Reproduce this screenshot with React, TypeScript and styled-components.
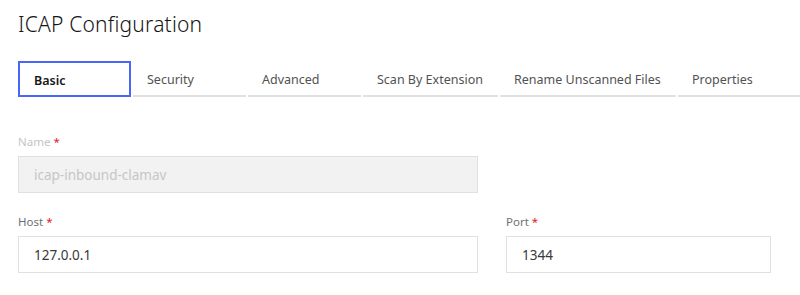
import styled, { createGlobalStyle } from "styled-components";

const GlobalStyle = createGlobalStyle`
  body {
    margin: 0;
    background: #ffffff;
    font-family: "Noto Sans", "Open Sans", sans-serif;
  }
`;

const tabs = [
  { label: "Basic", width: 113 },
  { label: "Security", width: 113 },
  { label: "Advanced", width: 113 },
  { label: "Scan By Extension", width: 135 },
  { label: "Rename Unscanned Files", width: 176 },
  { label: "Properties", width: 122 },
];

export default function App() {
  return (
    <>
      <GlobalStyle />
      <Page>
        <Title>ICAP Configuration</Title>
        <TabList>
          {tabs.map((t, i) => (
            <Tab key={t.label} $width={t.width} $selected={i === 0}>
              {t.label}
            </Tab>
          ))}
        </TabList>

        <Form>
          <Row>
            <Field $width={460}>
              <Label $disabled>
                Name <Required>*</Required>
              </Label>
              <Input value="icap-inbound-clamav" disabled readOnly />
            </Field>
          </Row>
          <Row>
            <Field $width={460}>
              <Label>
                Host <Required>*</Required>
              </Label>
              <Input value="127.0.0.1" readOnly />
            </Field>
            <Field $width={265}>
              <Label>
                Port <Required>*</Required>
              </Label>
              <Input value="1344" readOnly />
            </Field>
          </Row>
        </Form>
      </Page>
    </>
  );
}

const Page = styled.div`
  padding: 10px 0 0 18px;
`;

const Title = styled.h1`
  margin: 0;
  font-size: 21px;
  font-weight: 300;
  line-height: 28px;
  color: #161616;
  letter-spacing: 0.2px;
`;

const TabList = styled.div`
  display: flex;
  gap: 2px;
  margin-top: 23px;
`;

const Tab = styled.div<{ $width: number; $selected?: boolean }>`
  box-sizing: border-box;
  width: ${(p) => p.$width}px;
  flex-shrink: 0;
  height: 36px;
  display: flex;
  align-items: center;
  padding: 3px 14px 0;
  font-size: 12.5px;
  white-space: nowrap;
  color: ${(p) => (p.$selected ? "#161616" : "#525252")};
  font-weight: ${(p) => (p.$selected ? 600 : 400)};
  border: ${(p) => (p.$selected ? "2px solid #4a66f4" : "none")};
  border-bottom: 2px solid ${(p) => (p.$selected ? "#4a66f4" : "#e0e0e0")};
`;

const Form = styled.div`
  display: flex;
  flex-direction: column;
  gap: 22px;
  margin-top: 38px;
`;

const Row = styled.div`
  display: flex;
  gap: 28px;
`;

const Field = styled.div<{ $width: number }>`
  display: flex;
  flex-direction: column;
  width: ${(p) => p.$width}px;
`;

const Label = styled.label<{ $disabled?: boolean }>`
  font-size: 11.5px;
  line-height: 14px;
  color: ${(p) => (p.$disabled ? "#c6c6c6" : "#6f6f6f")};
  margin-bottom: 7px;
`;

const Required = styled.span`
  color: #da1e28;
`;

const Input = styled.input`
  box-sizing: border-box;
  width: 100%;
  height: 37px;
  padding: 0 15px;
  border: 1px solid #e0e0e0;
  background: #ffffff;
  font-family: "Noto Sans", "Open Sans", sans-serif;
  font-size: 13.5px;
  color: #393939;
  outline: none;

  &:disabled {
    background: #f2f2f2;
    color: #c6c6c6;
  }
`;
